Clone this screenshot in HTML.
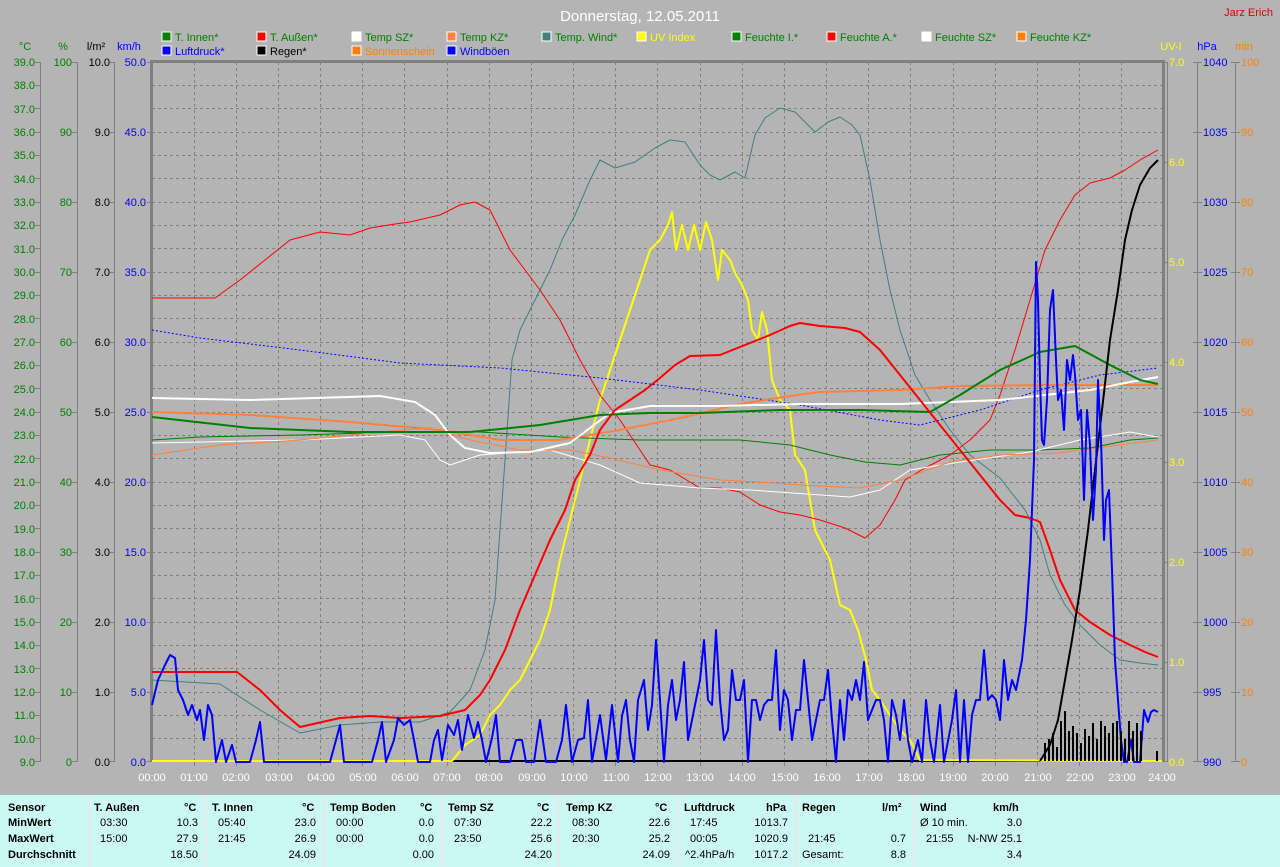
<!DOCTYPE html>
<html><head><meta charset="utf-8"><style>
body{margin:0;width:1280px;height:867px;overflow:hidden;background:#b4b4b4;font-family:"Liberation Sans",Arial,sans-serif}
svg{position:absolute;left:0;top:0}
.tb{position:absolute;left:0;top:795px;width:1280px;height:72px;background:#ccf8f4}
.c{position:absolute;top:0;height:72px;border-left:2px solid #e8e8e8}
.t{position:absolute;font-size:11px;white-space:nowrap;color:#000}
.b{font-weight:bold}
.r{text-align:right}
</style></head><body>
<svg width="1280" height="795" font-size="11">
<text x="640" y="21" fill="#fff" font-size="15" text-anchor="middle">Donnerstag, 12.05.2011</text>
<text x="1273" y="16" fill="#e00000" text-anchor="end">Jarz Erich</text>
<!-- legend -->
<g stroke="#fff" stroke-width="1">
<rect x="162" y="32" width="9" height="9" fill="#008000"/><rect x="257" y="32" width="9" height="9" fill="#ff0000"/><rect x="352" y="32" width="9" height="9" fill="#fff"/><rect x="447" y="32" width="9" height="9" fill="#ff8040"/><rect x="542" y="32" width="9" height="9" fill="#408080"/><rect x="637" y="32" width="9" height="9" fill="#ffff00"/><rect x="732" y="32" width="9" height="9" fill="#008000"/><rect x="827" y="32" width="9" height="9" fill="#ff0000"/><rect x="922" y="32" width="9" height="9" fill="#fff"/><rect x="1017" y="32" width="9" height="9" fill="#ff8000"/>
<rect x="162" y="46" width="9" height="9" fill="#0000ff"/><rect x="257" y="46" width="9" height="9" fill="#000"/><rect x="352" y="46" width="9" height="9" fill="#ff8000"/><rect x="447" y="46" width="9" height="9" fill="#0000ff"/>
</g>
<g>
<text x="175" y="41" fill="#008000">T. Innen*</text><text x="270" y="41" fill="#008000">T. Außen*</text><text x="365" y="41" fill="#008000">Temp SZ*</text><text x="460" y="41" fill="#008000">Temp KZ*</text><text x="555" y="41" fill="#008000">Temp. Wind*</text><text x="650" y="41" fill="#ffff00">UV Index</text><text x="745" y="41" fill="#008000">Feuchte I.*</text><text x="840" y="41" fill="#008000">Feuchte A.*</text><text x="935" y="41" fill="#008000">Feuchte SZ*</text><text x="1030" y="41" fill="#008000">Feuchte KZ*</text>
<text x="175" y="55" fill="#0000ff">Luftdruck*</text><text x="270" y="55" fill="#000">Regen*</text><text x="365" y="55" fill="#ff8000">Sonnenschein</text><text x="460" y="55" fill="#0000ff">Windböen</text>
</g>
<!-- unit labels -->
<text x="25" y="50" fill="#008000" text-anchor="middle">°C</text><text x="63" y="50" fill="#008000" text-anchor="middle">%</text><text x="96" y="50" fill="#000" text-anchor="middle">l/m²</text><text x="129" y="50" fill="#0000ff" text-anchor="middle">km/h</text>
<text x="1171" y="50" fill="#ffff00" text-anchor="middle">UV-I</text><text x="1207" y="50" fill="#0000ff" text-anchor="middle">hPa</text><text x="1244" y="50" fill="#ff8000" text-anchor="middle">min</text>
<!-- axis lines -->
<g stroke="#808080" stroke-width="1">
<line x1="40.5" y1="62" x2="40.5" y2="762"/><line x1="77.5" y1="62" x2="77.5" y2="762"/><line x1="114.5" y1="62" x2="114.5" y2="762"/>
<line x1="1197.5" y1="62" x2="1197.5" y2="762"/><line x1="1235.5" y1="62" x2="1235.5" y2="762"/>
</g>
<!-- plot frame -->
<rect x="151" y="62" width="1012" height="700" fill="#b4b4b4"/>
<g stroke="#808080" stroke-dasharray="3,3" stroke-width="1">
<path d="M152 85.5H1162M152 108.5H1162M152 132.5H1162M152 155.5H1162M152 178.5H1162M152 202.5H1162M152 225.5H1162M152 248.5H1162M152 272.5H1162M152 295.5H1162M152 318.5H1162M152 342.5H1162M152 365.5H1162M152 388.5H1162M152 412.5H1162M152 435.5H1162M152 458.5H1162M152 482.5H1162M152 505.5H1162M152 528.5H1162M152 552.5H1162M152 575.5H1162M152 598.5H1162M152 622.5H1162M152 645.5H1162M152 668.5H1162M152 692.5H1162M152 715.5H1162M152 738.5H1162"/>
<path d="M194.5 62V762M236.5 62V762M278.5 62V762M320.5 62V762M362.5 62V762M404.5 62V762M447.5 62V762M489.5 62V762M531.5 62V762M573.5 62V762M615.5 62V762M657.5 62V762M700.5 62V762M742.5 62V762M784.5 62V762M826.5 62V762M868.5 62V762M910.5 62V762M953.5 62V762M995.5 62V762M1037.5 62V762M1079.5 62V762M1121.5 62V762"/>
</g>
<g stroke="#808080" stroke-width="3" fill="none"><path d="M151.5 762V61.5H1163.5V762"/></g>
<line x1="1167.5" y1="62" x2="1167.5" y2="762" stroke="#808080"/>
<!-- ticks -->
<g stroke="#808080">
<path d="M35 62.5h5M35 85.5h5M35 108.5h5M35 132.5h5M35 155.5h5M35 178.5h5M35 202.5h5M35 225.5h5M35 248.5h5M35 272.5h5M35 295.5h5M35 318.5h5M35 342.5h5M35 365.5h5M35 388.5h5M35 412.5h5M35 435.5h5M35 458.5h5M35 482.5h5M35 505.5h5M35 528.5h5M35 552.5h5M35 575.5h5M35 598.5h5M35 622.5h5M35 645.5h5M35 668.5h5M35 692.5h5M35 715.5h5M35 738.5h5M35 761.5h5"/>
<path d="M72 62.5h5M72 132.5h5M72 202.5h5M72 272.5h5M72 342.5h5M72 412.5h5M72 482.5h5M72 552.5h5M72 622.5h5M72 692.5h5M72 761.5h5"/>
<path d="M110 62.5h5M110 132.5h5M110 202.5h5M110 272.5h5M110 342.5h5M110 412.5h5M110 482.5h5M110 552.5h5M110 622.5h5M110 692.5h5M110 761.5h5"/>
<path d="M147 62.5h4M147 132.5h4M147 202.5h4M147 272.5h4M147 342.5h4M147 412.5h4M147 482.5h4M147 552.5h4M147 622.5h4M147 692.5h4M147 761.5h4"/>
<path d="M1163 62.5h5M1163 162.5h5M1163 262.5h5M1163 362.5h5M1163 462.5h5M1163 562.5h5M1163 662.5h5M1163 761.5h5"/>
<path d="M1193 62.5h9M1193 132.5h9M1193 202.5h9M1193 272.5h9M1193 342.5h9M1193 412.5h9M1193 482.5h9M1193 552.5h9M1193 622.5h9M1193 692.5h9M1193 761.5h9"/>
<path d="M1231 62.5h9M1231 132.5h9M1231 202.5h9M1231 272.5h9M1231 342.5h9M1231 412.5h9M1231 482.5h9M1231 552.5h9M1231 622.5h9M1231 692.5h9M1231 761.5h9"/>
<path d="M194.5 762v4M236.5 762v4M278.5 762v4M320.5 762v4M362.5 762v4M404.5 762v4M447.5 762v4M489.5 762v4M531.5 762v4M573.5 762v4M615.5 762v4M657.5 762v4M700.5 762v4M742.5 762v4M784.5 762v4M826.5 762v4M868.5 762v4M910.5 762v4M953.5 762v4M995.5 762v4M1037.5 762v4M1079.5 762v4M1121.5 762v4"/>
</g>
<!-- left labels -->
<g fill="#008000" text-anchor="end">
<text x="35" y="66">39.0</text><text x="35" y="89">38.0</text><text x="35" y="113">37.0</text><text x="35" y="136">36.0</text><text x="35" y="159">35.0</text><text x="35" y="183">34.0</text><text x="35" y="206">33.0</text><text x="35" y="229">32.0</text><text x="35" y="253">31.0</text><text x="35" y="276">30.0</text><text x="35" y="299">29.0</text><text x="35" y="323">28.0</text><text x="35" y="346">27.0</text><text x="35" y="369">26.0</text><text x="35" y="393">25.0</text><text x="35" y="416">24.0</text><text x="35" y="439">23.0</text><text x="35" y="463">22.0</text><text x="35" y="486">21.0</text><text x="35" y="509">20.0</text><text x="35" y="533">19.0</text><text x="35" y="556">18.0</text><text x="35" y="579">17.0</text><text x="35" y="603">16.0</text><text x="35" y="626">15.0</text><text x="35" y="649">14.0</text><text x="35" y="673">13.0</text><text x="35" y="696">12.0</text><text x="35" y="719">11.0</text><text x="35" y="743">10.0</text><text x="35" y="766">9.0</text>
<text x="72" y="66">100</text><text x="72" y="136">90</text><text x="72" y="206">80</text><text x="72" y="276">70</text><text x="72" y="346">60</text><text x="72" y="416">50</text><text x="72" y="486">40</text><text x="72" y="556">30</text><text x="72" y="626">20</text><text x="72" y="696">10</text><text x="72" y="766">0</text>
</g>
<g fill="#000" text-anchor="end">
<text x="110" y="66">10.0</text><text x="110" y="136">9.0</text><text x="110" y="206">8.0</text><text x="110" y="276">7.0</text><text x="110" y="346">6.0</text><text x="110" y="416">5.0</text><text x="110" y="486">4.0</text><text x="110" y="556">3.0</text><text x="110" y="626">2.0</text><text x="110" y="696">1.0</text><text x="110" y="766">0.0</text>
</g>
<g fill="#0000ff" text-anchor="end">
<text x="146" y="66">50.0</text><text x="146" y="136">45.0</text><text x="146" y="206">40.0</text><text x="146" y="276">35.0</text><text x="146" y="346">30.0</text><text x="146" y="416">25.0</text><text x="146" y="486">20.0</text><text x="146" y="556">15.0</text><text x="146" y="626">10.0</text><text x="146" y="696">5.0</text><text x="146" y="766">0.0</text>
</g>
<g fill="#ffff00"><text x="1169" y="66">7.0</text><text x="1169" y="166">6.0</text><text x="1169" y="266">5.0</text><text x="1169" y="366">4.0</text><text x="1169" y="466">3.0</text><text x="1169" y="566">2.0</text><text x="1169" y="666">1.0</text><text x="1169" y="766">0.0</text></g>
<g fill="#0000ff"><text x="1203" y="66">1040</text><text x="1203" y="136">1035</text><text x="1203" y="206">1030</text><text x="1203" y="276">1025</text><text x="1203" y="346">1020</text><text x="1203" y="416">1015</text><text x="1203" y="486">1010</text><text x="1203" y="556">1005</text><text x="1203" y="626">1000</text><text x="1203" y="696">995</text><text x="1203" y="766">990</text></g>
<g fill="#ff8000"><text x="1241" y="66">100</text><text x="1241" y="136">90</text><text x="1241" y="206">80</text><text x="1241" y="276">70</text><text x="1241" y="346">60</text><text x="1241" y="416">50</text><text x="1241" y="486">40</text><text x="1241" y="556">30</text><text x="1241" y="626">20</text><text x="1241" y="696">10</text><text x="1241" y="766">0</text></g>
<!-- hour labels -->
<g fill="#fff" text-anchor="middle">
<text x="152" y="781">00:00</text><text x="194" y="781">01:00</text><text x="236" y="781">02:00</text><text x="279" y="781">03:00</text><text x="321" y="781">04:00</text><text x="363" y="781">05:00</text><text x="405" y="781">06:00</text><text x="447" y="781">07:00</text><text x="489" y="781">08:00</text><text x="532" y="781">09:00</text><text x="574" y="781">10:00</text><text x="616" y="781">11:00</text><text x="658" y="781">12:00</text><text x="700" y="781">13:00</text><text x="742" y="781">14:00</text><text x="785" y="781">15:00</text><text x="827" y="781">16:00</text><text x="869" y="781">17:00</text><text x="911" y="781">18:00</text><text x="953" y="781">19:00</text><text x="995" y="781">20:00</text><text x="1038" y="781">21:00</text><text x="1080" y="781">22:00</text><text x="1122" y="781">23:00</text><text x="1162" y="781">24:00</text>
</g>
<!-- data -->
<g fill="none" stroke-linejoin="round">
<polyline stroke="#000" stroke-width="2" points="152,761 1040,761"/>
<polyline stroke="#ffff00" stroke-width="2" points="152,761 452,761 465,745 480,735 490,715 500,705 510,690 520,680 530,660 540,640 550,610 560,560 570,520 580,480 590,440 600,400 610,370 620,340 630,310 640,280 650,250 660,240 668,225 672,212 676,250 682,225 688,250 694,225 700,250 706,222 712,240 718,280 722,250 730,260 736,275 742,285 748,300 752,330 758,340 762,312 767,330 772,380 780,400 790,410 795,455 805,470 815,530 830,560 840,605 850,610 858,630 866,660 872,690 880,700 890,715 900,730 910,740 920,760 1162,761"/>
<polyline stroke="#408080" stroke-width="1" points="152,680 220,684 260,710 300,733 340,725 380,722 420,722 450,712 470,690 485,650 495,600 505,460 512,360 520,330 535,300 550,270 562,240 575,215 590,180 600,160 615,168 635,162 655,148 670,140 685,142 700,165 710,175 720,180 735,172 745,178 755,135 765,118 780,108 795,112 805,122 815,132 828,122 840,117 852,125 860,135 870,180 880,240 890,290 900,330 915,375 930,400 950,430 970,455 1000,478 1025,510 1040,540 1050,575 1065,605 1080,625 1100,645 1120,660 1140,663 1158,665"/>
<polyline stroke="#ff0000" stroke-width="1" points="152,298 215,298 240,280 265,260 290,240 320,232 350,235 370,228 395,224 410,222 440,215 460,205 475,202 490,210 500,230 510,250 525,270 540,290 560,320 580,360 600,395 620,420 640,450 650,465 670,470 700,488 720,488 740,492 760,505 780,512 800,515 820,520 845,528 865,538 880,525 895,500 905,480 925,468 950,455 970,440 990,420 1000,395 1015,350 1030,300 1045,250 1060,220 1075,195 1090,183 1110,178 1125,170 1140,160 1158,150"/>
<polyline stroke="#008000" stroke-width="1" points="152,440 200,437 300,435 400,432 480,432 560,437 640,440 740,440 790,445 830,455 865,462 900,465 940,455 990,450 1040,450 1090,448 1130,440 1158,438"/>
<polyline stroke="#fff" stroke-width="1" points="152,443 300,440 400,435 425,440 440,460 450,465 480,455 550,450 600,465 640,483 700,488 750,490 850,497 880,490 910,470 960,462 1030,452 1080,440 1130,432 1158,437"/>
<polyline stroke="#ff8040" stroke-width="1" points="152,455 220,445 300,440 380,432 430,428 470,440 520,450 570,450 610,458 660,470 720,480 760,482 800,485 860,488 900,480 950,462 1000,455 1058,453 1080,450 1158,440"/>
<polyline stroke="#0000ff" stroke-width="1" stroke-dasharray="2,2" points="152,330 200,338 300,350 400,363 500,368 600,378 700,390 800,405 880,420 920,425 980,410 1040,390 1100,375 1158,368"/>
<polyline stroke="#ff8040" stroke-width="2" points="152,412 250,415 350,422 440,430 500,440 560,440 620,430 680,418 740,404 790,396 820,392 900,390 960,386 1050,385 1158,385"/>
<polyline stroke="#fff" stroke-width="2" points="152,398 250,400 380,396 415,402 435,415 450,435 465,448 490,453 530,452 570,443 610,413 650,406 720,406 800,404 900,404 1000,400 1090,390 1130,382 1158,377"/>
<polyline stroke="#008000" stroke-width="2" points="152,417 250,428 350,432 470,432 540,425 600,415 650,413 700,413 780,410 860,410 930,412 960,395 1000,370 1040,352 1075,346 1110,365 1140,380 1158,384"/>
<polyline stroke="#ff0000" stroke-width="2" points="152,672 237,672 260,690 280,710 300,727 340,718 370,716 400,718 440,716 465,710 480,695 490,680 505,650 520,610 535,575 550,540 565,510 575,480 590,455 600,430 615,410 630,400 645,390 660,378 675,365 690,356 720,355 745,345 770,335 790,326 800,323 820,326 845,328 860,332 880,350 900,375 920,400 940,425 960,450 980,475 1000,500 1015,515 1030,518 1040,522 1050,550 1060,580 1075,610 1090,622 1110,635 1130,645 1145,652 1158,657"/>
<polyline stroke="#000" stroke-width="2" points="1040,761 1050,745 1058,720 1065,680 1072,640 1080,590 1088,530 1095,470 1102,410 1110,340 1118,290 1125,240 1132,210 1140,185 1150,168 1158,160"/>
<polyline stroke="#0000ff" stroke-width="2" points="152,705 158,680 165,665 170,655 175,658 178,690 183,700 188,715 192,705 197,720 200,710 204,740 208,705 212,715 216,762 222,740 226,762 232,745 236,762 250,762 256,740 260,722 264,762 330,762 336,740 340,725 344,762 372,762 378,740 382,722 386,762 394,740 398,718 404,725 410,720 414,740 418,762 430,762 434,740 438,730 442,760 448,725 454,735 458,720 462,750 468,715 474,738 478,722 482,740 486,762 492,738 496,715 500,762 510,762 516,740 522,740 526,762 534,762 540,720 546,762 556,762 562,740 566,705 572,762 578,740 584,738 588,700 592,762 600,715 606,760 612,705 618,762 622,716 626,700 630,740 634,762 638,700 644,680 648,730 652,705 656,640 660,700 664,762 668,705 672,680 676,720 680,700 684,662 688,740 692,720 696,700 700,680 704,640 708,700 712,705 716,630 720,700 724,740 728,730 732,670 736,700 740,700 744,680 748,762 752,700 756,700 760,720 764,705 768,700 772,700 776,650 780,730 784,690 788,700 792,740 796,710 800,710 804,660 808,700 812,740 816,720 820,700 824,700 828,670 832,720 836,762 840,700 844,740 848,690 852,700 856,680 860,700 864,662 868,720 872,710 876,700 880,700 884,720 888,762 892,700 896,715 900,740 904,700 908,740 912,762 918,740 922,762 926,700 930,740 934,762 940,705 944,762 952,720 956,690 960,762 964,700 968,762 972,715 976,700 980,700 984,650 988,700 992,695 996,700 1000,720 1004,660 1008,700 1012,680 1016,690 1018,680 1022,660 1026,620 1030,560 1034,460 1036,262 1038,300 1040,380 1042,440 1044,445 1047,400 1050,310 1053,290 1056,360 1058,400 1061,390 1064,430 1067,360 1070,380 1073,355 1075,375 1078,420 1081,410 1084,500 1087,410 1090,445 1093,520 1096,470 1098,380 1101,440 1104,540 1106,500 1109,490 1112,570 1115,660 1118,700 1121,740 1124,762 1127,762 1131,740 1134,762 1140,762 1144,710 1148,722 1151,712 1154,710 1158,712"/>
</g>
<g stroke="#000" stroke-width="2">
<path d="M1045 761v-18M1049 761v-22M1053 761v-28M1057 761v-14M1061 761v-40M1065 761v-50M1069 761v-30M1073 761v-35M1077 761v-28M1081 761v-18M1085 761v-32M1089 761v-25M1093 761v-38M1097 761v-22M1101 761v-40M1105 761v-35M1109 761v-28M1113 761v-38M1117 761v-40M1121 761v-30M1125 761v-22M1129 761v-40M1133 761v-30M1137 761v-38M1141 761v-30M1157 761v-10"/>
</g>
</svg>
<div class="tb">
<div class="c" style="left:88px"></div><div class="c" style="left:205px"></div><div class="c" style="left:323px"></div><div class="c" style="left:441px"></div><div class="c" style="left:558px"></div><div class="c" style="left:677px"></div><div class="c" style="left:795px"></div><div class="c" style="left:913px"></div>
<div class="t b" style="left:8px;top:7px">Sensor</div><div class="t b" style="left:8px;top:22px">MinWert</div><div class="t b" style="left:8px;top:38px">MaxWert</div><div class="t b" style="left:8px;top:54px">Durchschnitt</div>

<div class="t b" style="left:94px;top:7px">T. Außen</div><div class="t b" style="left:184px;top:7px">°C</div>
<div class="t" style="left:100px;top:22px">03:30</div><div class="t" style="left:100px;top:38px">15:00</div>
<div class="t r" style="left:160px;width:38px;top:22px">10.3</div><div class="t r" style="left:160px;width:38px;top:38px">27.9</div><div class="t r" style="left:160px;width:38px;top:54px">18.50</div>

<div class="t b" style="left:212px;top:7px">T. Innen</div><div class="t b" style="left:302px;top:7px">°C</div>
<div class="t" style="left:218px;top:22px">05:40</div><div class="t" style="left:218px;top:38px">21:45</div>
<div class="t r" style="left:278px;width:38px;top:22px">23.0</div><div class="t r" style="left:278px;width:38px;top:38px">26.9</div><div class="t r" style="left:278px;width:38px;top:54px">24.09</div>

<div class="t b" style="left:330px;top:7px">Temp Boden</div><div class="t b" style="left:420px;top:7px">°C</div>
<div class="t" style="left:336px;top:22px">00:00</div><div class="t" style="left:336px;top:38px">00:00</div>
<div class="t r" style="left:396px;width:38px;top:22px">0.0</div><div class="t r" style="left:396px;width:38px;top:38px">0.0</div><div class="t r" style="left:396px;width:38px;top:54px">0.00</div>

<div class="t b" style="left:448px;top:7px">Temp SZ</div><div class="t b" style="left:537px;top:7px">°C</div>
<div class="t" style="left:454px;top:22px">07:30</div><div class="t" style="left:454px;top:38px">23:50</div>
<div class="t r" style="left:514px;width:38px;top:22px">22.2</div><div class="t r" style="left:514px;width:38px;top:38px">25.6</div><div class="t r" style="left:514px;width:38px;top:54px">24.20</div>

<div class="t b" style="left:566px;top:7px">Temp KZ</div><div class="t b" style="left:655px;top:7px">°C</div>
<div class="t" style="left:572px;top:22px">08:30</div><div class="t" style="left:572px;top:38px">20:30</div>
<div class="t r" style="left:632px;width:38px;top:22px">22.6</div><div class="t r" style="left:632px;width:38px;top:38px">25.2</div><div class="t r" style="left:632px;width:38px;top:54px">24.09</div>

<div class="t b" style="left:684px;top:7px">Luftdruck</div><div class="t b" style="left:766px;top:7px">hPa</div>
<div class="t" style="left:690px;top:22px">17:45</div><div class="t" style="left:690px;top:38px">00:05</div><div class="t" style="left:685px;top:54px">^2.4hPa/h</div>
<div class="t r" style="left:740px;width:48px;top:22px">1013.7</div><div class="t r" style="left:740px;width:48px;top:38px">1020.9</div><div class="t r" style="left:740px;width:48px;top:54px">1017.2</div>

<div class="t b" style="left:802px;top:7px">Regen</div><div class="t b" style="left:882px;top:7px">l/m²</div>
<div class="t" style="left:808px;top:38px">21:45</div><div class="t" style="left:802px;top:54px">Gesamt:</div>
<div class="t r" style="left:860px;width:46px;top:38px">0.7</div><div class="t r" style="left:860px;width:46px;top:54px">8.8</div>

<div class="t b" style="left:920px;top:7px">Wind</div><div class="t b" style="left:993px;top:7px">km/h</div>
<div class="t" style="left:920px;top:22px">Ø 10 min.</div><div class="t" style="left:926px;top:38px">21:55</div>
<div class="t r" style="left:960px;width:62px;top:22px">3.0</div><div class="t r" style="left:960px;width:62px;top:38px">N-NW 25.1</div><div class="t r" style="left:960px;width:62px;top:54px">3.4</div>
</div>
</body></html>
